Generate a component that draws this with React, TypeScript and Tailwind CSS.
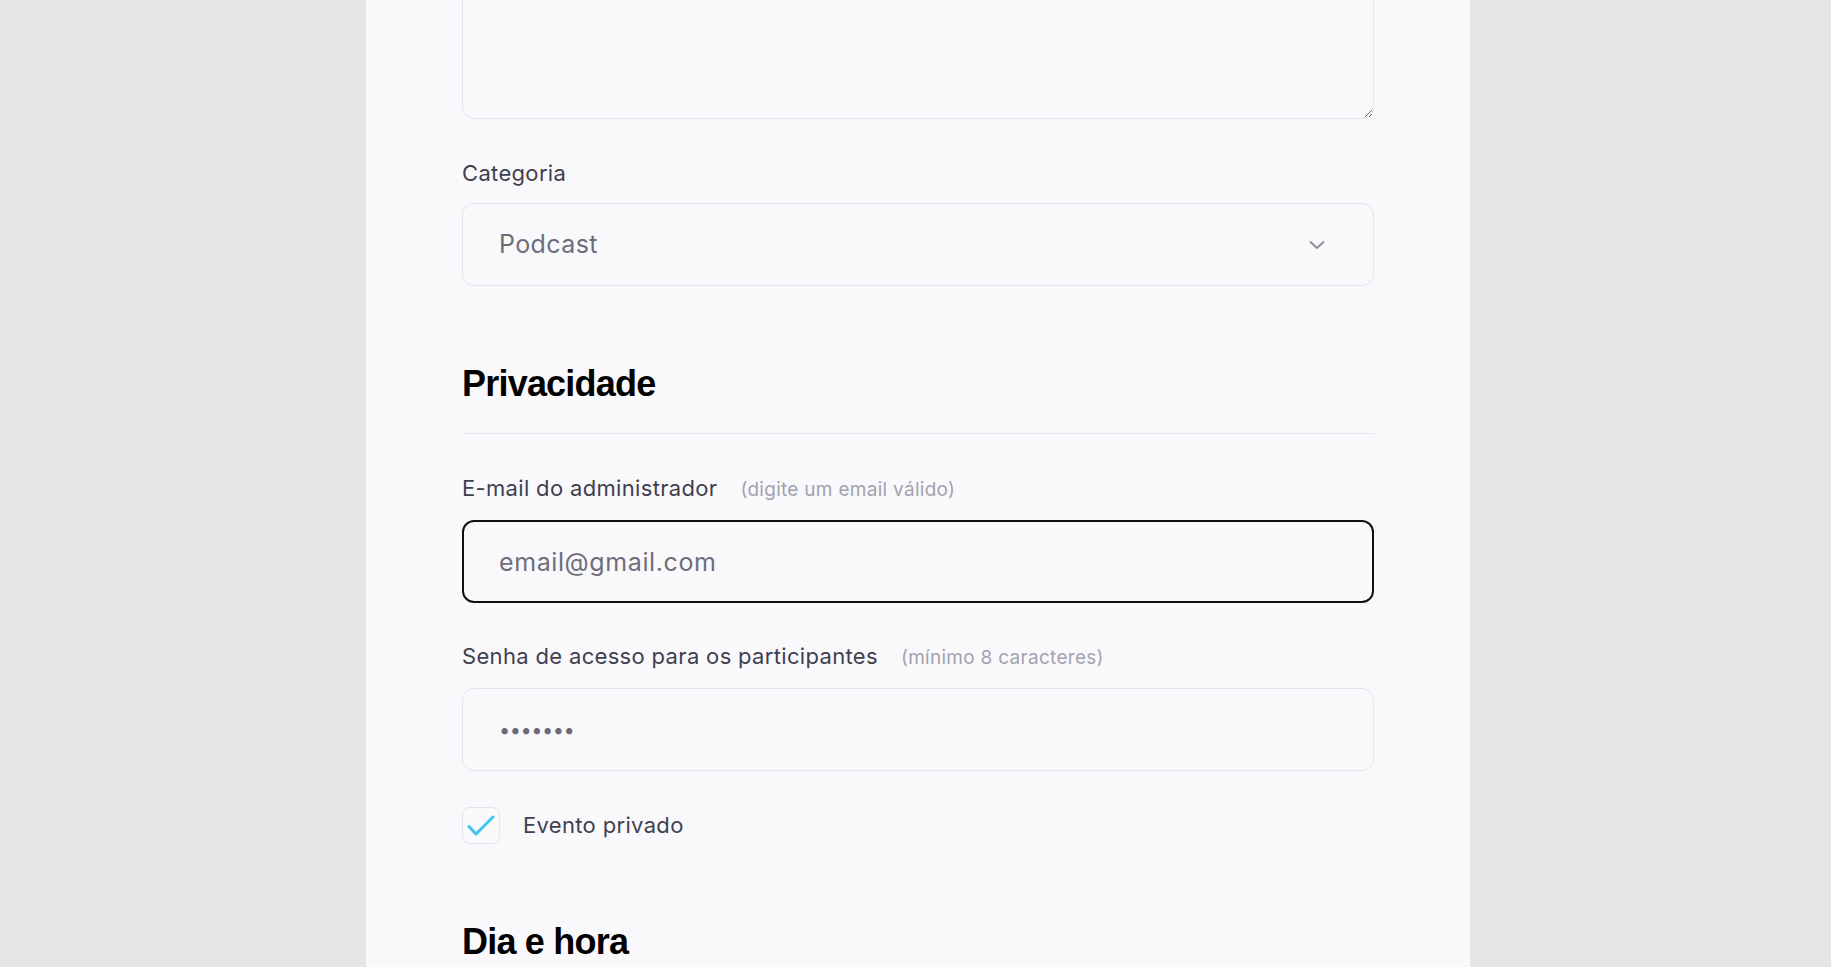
import React from 'react';

const body = { fontFamily: 'Inter, "Open Sans", sans-serif' };
const head = { fontFamily: '"Liberation Sans", Arial, sans-serif' };

const Label: React.FC<{ text: string; hint?: string }> = ({ text, hint }) => (
  <div className="flex items-baseline gap-[23px] leading-[28px] mb-4">
    <span className="text-[22px] tracking-[0.015em] text-[#3f3f50]">{text}</span>
    {hint && <span className="text-[19px] tracking-[0.015em] text-[#a3a2ae]">{hint}</span>}
  </div>
);

const SectionTitle: React.FC<{ children: React.ReactNode; divider?: boolean }> = ({ children, divider }) => (
  <h2
    style={head}
    className={`text-[36px] leading-[40px] font-bold tracking-[-0.022em] text-black ${divider ? 'pb-[29px] border-b border-[#e6e6ee]' : ''}`}
  >
    {children}
  </h2>
);

export default function App() {
  return (
    <div style={body} className="h-screen overflow-hidden bg-[#e5e5e5] flex justify-center">
      <div className="w-[1104px] ml-[5px] h-full bg-[#f9f9fb] px-24">
        {/* description textarea, scrolled partly out of view */}
        <textarea
          className="block w-full h-[160px] -mt-[41px] rounded-xl border border-[#e4e4ec] bg-[#f9f9fb] outline-none"
          defaultValue=""
        />

        {/* category */}
        <div className="mt-10">
          <Label text="Categoria" />
          <div className="h-[83px] rounded-xl border border-[#e4e4ec] bg-[#f9f9fb] pl-9 pr-12 flex items-center justify-between">
            <span className="text-[25px] tracking-[0.4px] text-[#6e6e7b]">Podcast</span>
            <svg width="16" height="10" viewBox="0 0 16 10" fill="none">
              <path d="M1.5 2 L8 8 L14.5 2" stroke="#8d8d9a" strokeWidth="1.8" strokeLinecap="round" strokeLinejoin="round" />
            </svg>
          </div>
        </div>

        <div className="mt-[78px]">
          <SectionTitle divider>Privacidade</SectionTitle>
        </div>

        {/* admin email */}
        <div className="mt-10">
          <Label text="E-mail do administrador" hint="(digite um email válido)" />
          <input
            type="email"
            placeholder="email@gmail.com"
            className="block w-full h-[83px] rounded-xl border-2 border-[#111111] bg-[#f9f9fb] pl-[35px] text-[25px] tracking-[0.6px] text-[#3f3f50] placeholder:text-[#6e6e7b] outline-none"
          />
        </div>

        {/* password */}
        <div className="mt-[39px]">
          <Label text="Senha de acesso para os participantes" hint="(mínimo 8 caracteres)" />
          <input
            type="password"
            defaultValue="1234567"
            readOnly
            className="block w-full h-[83px] rounded-xl border border-[#e4e4ec] bg-[#f9f9fb] pl-9 text-[20px] tracking-[-0.5px] text-[#6b6b78] outline-none"
          />
        </div>

        {/* private event */}
        <label className="mt-[36px] flex items-center gap-[23px]">
          <span className="w-[38px] h-[37px] rounded-lg border border-[#e4e4ec] bg-[#fafafc] flex items-center justify-center">
            <svg width="28" height="22" viewBox="0 0 28 22" fill="none">
              <path d="M2 11.5 L9 19 L26 2" stroke="#3ac6f0" strokeWidth="3" strokeLinecap="round" strokeLinejoin="round" />
            </svg>
          </span>
          <span className="text-[22px] tracking-[0.015em] text-[#3f3f50]">Evento privado</span>
        </label>

        <div className="mt-[78px]">
          <SectionTitle>Dia e hora</SectionTitle>
        </div>
      </div>
    </div>
  );
}
